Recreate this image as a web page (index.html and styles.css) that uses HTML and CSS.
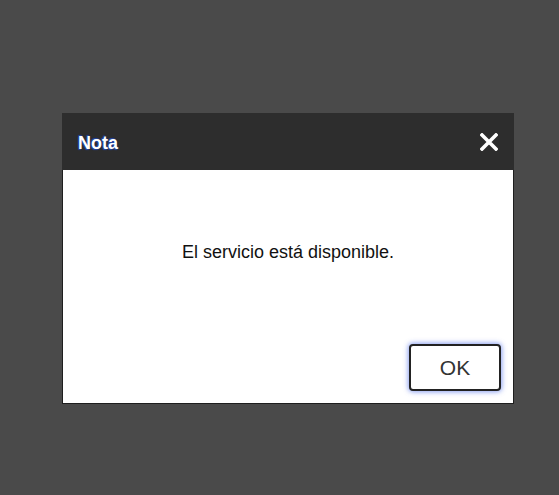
FILE: index.html
```html
<!DOCTYPE html>
<html lang="es">
<head>
    <meta charset="UTF-8">
    <meta name="viewport" content="width=device-width, initial-scale=1.0">
    <title>Nota</title>
    <link rel="stylesheet" href="styles.css">
</head>
<body>
    <div class="dialog">
        <div class="dialog-header">
            <span class="dialog-title">Nota</span>
            <span class="close">
                <svg width="18" height="18" viewBox="0 0 18 18">
                    <path d="M2 2 L16 16 M16 2 L2 16" stroke="#fff" stroke-width="3.6" stroke-linecap="square" fill="none"/>
                </svg>
            </span>
        </div>
        <div class="dialog-body">
            <p class="message">El servicio está disponible.</p>
            <div class="actions">
                <button class="button">OK</button>
            </div>
        </div>
    </div>
</body>
</html>
```

FILE: styles.css
```css
html {
    background-color: #4a4a4a;
    font-family: "Liberation Sans", Arial, sans-serif;
}

body {
    margin: 0;
    padding: 113px 0 0 62px;
}

.dialog {
    width: 452px;
    background-color: #fff;
    box-sizing: border-box;
    border: 1px solid #1e1e1e;
    border-top: none;
}

.dialog-header {
    height: 57px;
    margin: 0 -1px;
    padding: 0 16px;
    background-color: #2d2d2d;
    display: flex;
    align-items: center;
    justify-content: space-between;
}

.dialog-title {
    color: #fff;
    font-size: 18px;
    font-weight: bold;
    margin-top: 3px;
    text-shadow: -1px -1px 1px #2244aa, -1px 1px 1px #2244aa;
}

.close {
    display: flex;
    margin-top: 1px;
}

.dialog-body {
    height: 233px;
    display: flex;
    flex-direction: column;
}

.message {
    margin: 72px 0 0;
    text-align: center;
    font-size: 18px;
    color: #111;
}

.actions {
    margin-top: auto;
    display: flex;
    justify-content: flex-end;
    padding: 0 12px 12px 0;
}

.button {
    width: 92px;
    height: 47px;
    background-color: #fff;
    border: 2px solid #222;
    border-radius: 4px;
    font-family: "Liberation Sans", Arial, sans-serif;
    font-size: 21px;
    color: #333;
    box-shadow: 0 0 5px 1px rgba(90, 120, 235, 0.7);
}
```
